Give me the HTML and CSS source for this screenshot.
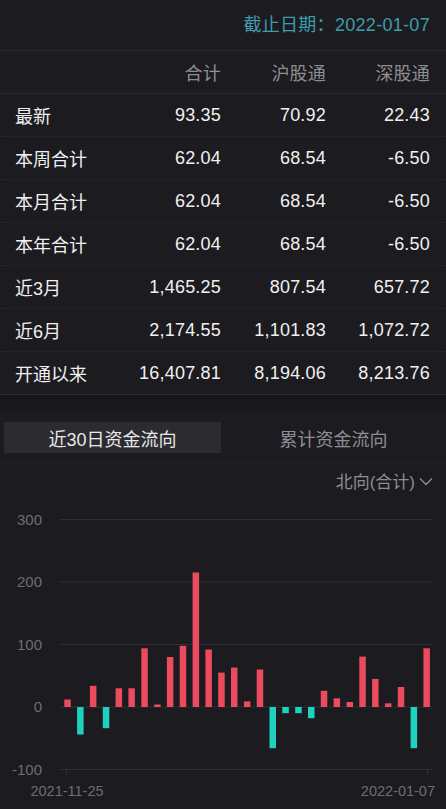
FILE: index.html
```html
<!DOCTYPE html>
<html lang="zh-CN">
<head>
	<meta charset="UTF-8">
	<title>资金流向</title>
	<link rel="stylesheet" href="styles.css">
</head>
<body>
<div class="page">
	<div class="date-bar"><span class="date">截止日期：2022-01-07</span></div>

	<div class="flow-table">
		<div class="row head">
			<span></span><span>合计</span><span>沪股通</span><span>深股通</span>
		</div>
		<div class="row">
			<span class="label">最新</span><span>93.35</span><span>70.92</span><span>22.43</span>
		</div>
		<div class="row">
			<span class="label">本周合计</span><span>62.04</span><span>68.54</span><span>-6.50</span>
		</div>
		<div class="row">
			<span class="label">本月合计</span><span>62.04</span><span>68.54</span><span>-6.50</span>
		</div>
		<div class="row">
			<span class="label">本年合计</span><span>62.04</span><span>68.54</span><span>-6.50</span>
		</div>
		<div class="row">
			<span class="label">近3月</span><span>1,465.25</span><span>807.54</span><span>657.72</span>
		</div>
		<div class="row">
			<span class="label">近6月</span><span>2,174.55</span><span>1,101.83</span><span>1,072.72</span>
		</div>
		<div class="row last">
			<span class="label">开通以来</span><span>16,407.81</span><span>8,194.06</span><span>8,213.76</span>
		</div>
	</div>

	<div class="gap"></div>

	<div class="tabs">
		<div class="tab active">近30日资金流向</div>
		<div class="tab">累计资金流向</div>
	</div>

	<div class="filter">
		<span>北向(合计)</span>
		<svg class="chev" width="14" height="9" viewBox="0 0 14 9"><polyline points="1,1.5 7,7.5 13,1.5" fill="none" stroke="#8e8e93" stroke-width="1.4"/></svg>
	</div>

	<svg class="chart" width="446" height="309" viewBox="0 0 446 309">
		<g class="grid">
			<line x1="60" y1="19.5" x2="433" y2="19.5"/>
			<line x1="60" y1="82" x2="433" y2="82"/>
			<line x1="60" y1="144.5" x2="433" y2="144.5"/>
			<line x1="60" y1="207" x2="433" y2="207"/>
			<line x1="60" y1="269.5" x2="433" y2="269.5"/>
			<line x1="66.5" y1="269.5" x2="66.5" y2="275"/>
			<line x1="427.5" y1="269.5" x2="427.5" y2="275"/>
		</g>
		<g class="ylabels">
			<text x="42" y="24.5">300</text>
			<text x="42" y="87">200</text>
			<text x="42" y="149.5">100</text>
			<text x="42" y="212">0</text>
			<text x="42" y="274.5">-100</text>
		</g>
		<g class="up">
			<rect x="64.3" y="199.5" width="6.5" height="7.5"/>
			<rect x="89.9" y="185.8" width="6.5" height="21.2"/>
			<rect x="115.6" y="188.3" width="6.5" height="18.7"/>
			<rect x="128.4" y="188.3" width="6.5" height="18.7"/>
			<rect x="141.3" y="148.3" width="6.5" height="58.7"/>
			<rect x="154.1" y="204.5" width="6.5" height="2.5"/>
			<rect x="166.9" y="157" width="6.5" height="50"/>
			<rect x="179.7" y="145.8" width="6.5" height="61.2"/>
			<rect x="192.6" y="72.5" width="6.5" height="134.5"/>
			<rect x="205.4" y="149.5" width="6.5" height="57.5"/>
			<rect x="218.2" y="172.6" width="6.5" height="34.4"/>
			<rect x="231" y="167.6" width="6.5" height="39.4"/>
			<rect x="243.9" y="201.4" width="6.5" height="5.6"/>
			<rect x="256.7" y="169.5" width="6.5" height="37.5"/>
			<rect x="320.8" y="190.8" width="6.5" height="16.2"/>
			<rect x="333.6" y="198.3" width="6.5" height="8.7"/>
			<rect x="346.5" y="202" width="6.5" height="5"/>
			<rect x="359.3" y="156.6" width="6.5" height="50.4"/>
			<rect x="372.1" y="178.9" width="6.5" height="28.1"/>
			<rect x="385" y="203.3" width="6.5" height="3.7"/>
			<rect x="397.8" y="187" width="6.5" height="20"/>
			<rect x="423.4" y="148.3" width="6.5" height="58.7"/>
		</g>
		<g class="down">
			<rect x="77.1" y="207" width="6.5" height="27.5"/>
			<rect x="102.8" y="207" width="6.5" height="21.2"/>
			<rect x="269.5" y="207" width="6.5" height="41.2"/>
			<rect x="282.3" y="207" width="6.5" height="6.2"/>
			<rect x="295.2" y="207" width="6.5" height="6.2"/>
			<rect x="308" y="207" width="6.5" height="11.2"/>
			<rect x="410.6" y="207" width="6.5" height="41.2"/>
		</g>
		<g class="xlabels">
			<text x="67" y="296" text-anchor="middle">2021-11-25</text>
			<text x="435" y="296" text-anchor="end">2022-01-07</text>
		</g>
	</svg>
</div>
</body>
</html>
```

FILE: styles.css
```css
*{margin:0;padding:0;box-sizing:border-box}
body{background:#1c1b20;font-family:"Liberation Sans","Noto Sans CJK SC",sans-serif;color:#f0f0f0}
.page{width:446px}

.date-bar{height:51px;padding:0 16px 5px 0;display:flex;align-items:center;justify-content:flex-end;border-bottom:1px solid #2a292e}
.date{color:#3f9cab;font-size:18px;letter-spacing:0.3px}

.flow-table{padding:0}
.row{display:grid;grid-template-columns:1fr 105px 105px 104px;height:43px;align-items:center;padding:0 16px 0 15px;border-bottom:1px dotted #2b2a30;font-size:18px}
.row span{text-align:right;letter-spacing:0.2px}
.row .label{text-align:left;letter-spacing:0}
.row.head{border-bottom:1px solid #2a292e;color:#8e8e93}
.row.last{border-bottom:1px solid #2e2d33}

.gap{height:15px;background:linear-gradient(#161519,#1a191d)}

.tabs{display:flex;gap:4px;padding:12px 4px 9px;border-bottom:1px solid #222126}
.tab{flex:1;height:31px;display:flex;align-items:center;justify-content:center;font-size:18px;color:#8e8e93}
.tab.active{background:#2c2b30;color:#e8e8e8;flex:0 0 217px}

.filter{height:37px;display:flex;align-items:center;justify-content:flex-end;gap:4px;padding:0 13px 2px 0;color:#8e8e93;font-size:17px}
.chev{display:block;margin-top:1px}

.chart{display:block}
.grid line{stroke:#2f2e34;stroke-width:1}
.ylabels text{fill:#6e6d73;font-size:15px;text-anchor:end;font-family:"Liberation Sans",sans-serif}
.xlabels text{fill:#6e6d73;font-size:14.5px;font-family:"Liberation Sans",sans-serif}
.up rect{fill:#ec4a5f}
.down rect{fill:#1dd3c0}
```
